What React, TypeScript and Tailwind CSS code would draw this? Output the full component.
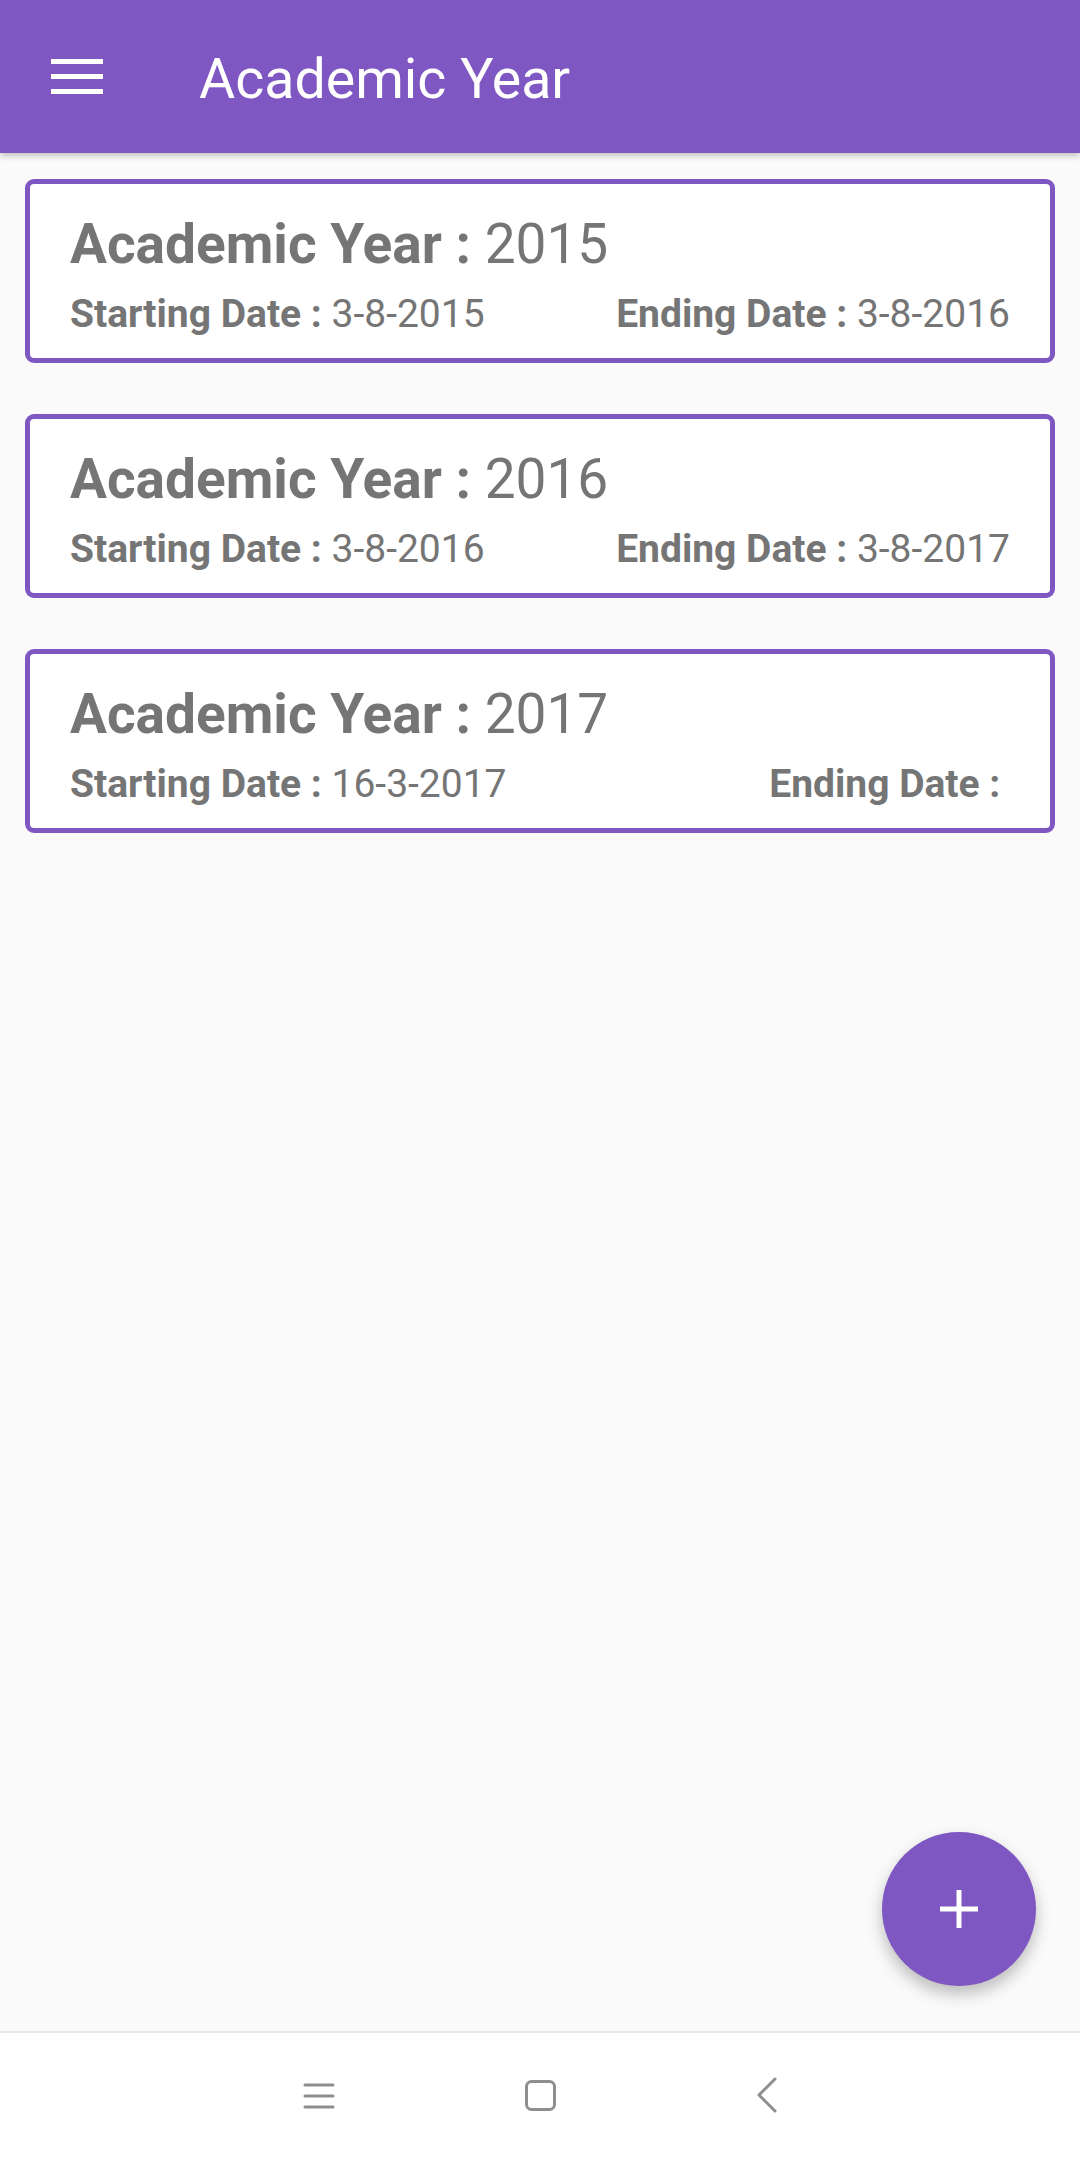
import React from 'react';

interface AcademicYear {
  year: string;
  start: string;
  end: string;
}

const years: AcademicYear[] = [
  { year: '2015', start: '3-8-2015', end: '3-8-2016' },
  { year: '2016', start: '3-8-2016', end: '3-8-2017' },
  { year: '2017', start: '16-3-2017', end: '' },
];

const YearCard: React.FC<{ item: AcademicYear }> = ({ item }) => (
  <div className="h-[184px] bg-white border-[5px] border-[#7e57c2] rounded-[9px] px-[40px] pt-[28px]">
    <div className="text-[55px] leading-[64px] text-[#757575] whitespace-nowrap">
      <span className="font-bold">Academic Year :</span> {item.year}
    </div>
    <div className="mt-[16px] flex justify-between text-[39px] leading-[44px] text-[#757575] whitespace-nowrap">
      <div>
        <span className="font-bold">Starting Date :</span> {item.start}
      </div>
      <div>
        <span className="font-bold">Ending Date :</span>
        {'\u00a0'}
        {item.end}
      </div>
    </div>
  </div>
);

export default function App() {
  return (
    <div className="relative w-[1080px] h-[2160px] bg-[#fafafa] flex flex-col font-['Roboto',sans-serif]">
      {/* Barra superior */}
      <header className="relative z-10 h-[153px] shrink-0 bg-[#7e57c2] flex items-center shadow-[0_3px_6px_rgba(0,0,0,0.22)]">
        <div className="ml-[51px] w-[52px] flex flex-col gap-[10px]">
          <div className="h-[5px] bg-white" />
          <div className="h-[5px] bg-white" />
          <div className="h-[5px] bg-white" />
        </div>
        <h1 className="ml-[96px] mt-[6px] text-[55.5px] leading-[64px] text-white font-normal">Academic Year</h1>
      </header>

      {/* Lista */}
      <main className="flex-1 px-[25px] pt-[26px] flex flex-col gap-[51px]">
        {years.map((y) => (
          <YearCard key={y.year} item={y} />
        ))}
      </main>

      {/* Botón flotante */}
      <button className="absolute right-[44px] bottom-[174px] w-[154px] h-[154px] rounded-full bg-[#7e57c2] flex items-center justify-center shadow-[0_8px_16px_rgba(0,0,0,0.25)]">
        <svg width="38" height="38" viewBox="0 0 38 38">
          <rect x="16.5" y="0" width="5" height="38" fill="white" />
          <rect x="0" y="16.5" width="38" height="5" fill="white" />
        </svg>
      </button>

      {/* Barra de navegación */}
      <nav className="h-[129px] shrink-0 bg-white border-t-2 border-[#e8e8e8] flex items-center pl-[303px]">
        <svg width="32" height="26" viewBox="0 0 32 26" className="mt-[-2px]">
          <g stroke="#8e8e8e" strokeWidth="3" strokeLinecap="round">
            <line x1="2" y1="2" x2="30" y2="2" />
            <line x1="2" y1="13" x2="30" y2="13" />
            <line x1="2" y1="24" x2="30" y2="24" />
          </g>
        </svg>
        <svg width="31" height="31" viewBox="0 0 31 31" className="ml-[190px] mt-[-2px]">
          <rect x="1.5" y="1.5" width="28" height="28" rx="5" fill="none" stroke="#8e8e8e" strokeWidth="3" />
        </svg>
        <svg width="22" height="36" viewBox="0 0 22 36" className="ml-[200px] mt-[-4px]">
          <polyline points="19,2 3,18 19,34" fill="none" stroke="#8e8e8e" strokeWidth="3" strokeLinecap="round" strokeLinejoin="round" />
        </svg>
      </nav>
    </div>
  );
}
